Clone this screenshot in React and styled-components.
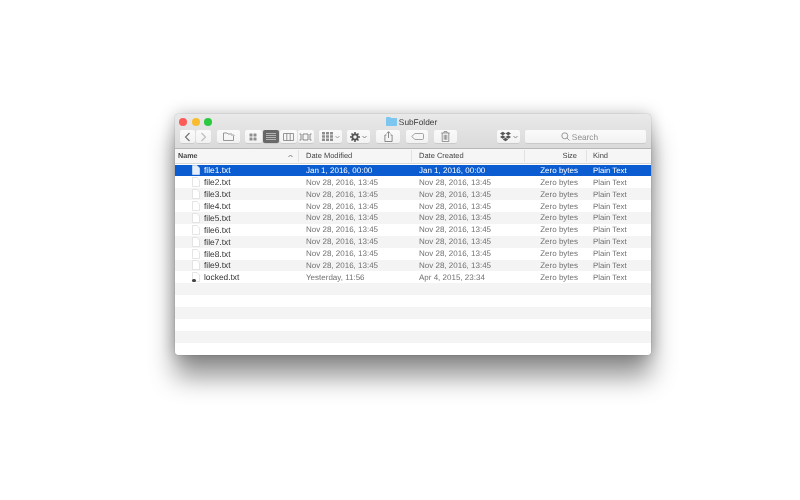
import React from 'react';
import styled, { createGlobalStyle } from 'styled-components';
import { FaDropbox } from 'react-icons/fa';

const GlobalStyle = createGlobalStyle`
  html, body {
    margin: 0;
    background: #fff;
    font-family: "Liberation Sans", Arial, sans-serif;
    text-rendering: geometricPrecision;
  }
`;

const Page = styled.div`
  width: 800px;
  height: 500px;
  padding: 114px 0 0 175px;
  box-sizing: border-box;
  overflow: hidden;
`;

const Window = styled.div`
  width: 476px;
  height: 241px;
  border-radius: 4px;
  overflow: hidden;
  background: #fff;
  box-shadow: 0 22px 26px rgba(0, 0, 0, 0.42), 0 0 16px rgba(0, 0, 0, 0.26), 0 0 1px rgba(0, 0, 0, 0.5);
  filter: blur(0.3px);
`;

const TitleBar = styled.div`
  height: 35px;
  box-sizing: border-box;
  background: linear-gradient(#e9e9e9, #dadada);
  border-bottom: 1px solid #b8b8b8;
`;

const TitleRow = styled.div`
  position: relative;
  height: 15px;
  display: flex;
  align-items: center;
  justify-content: center;
  gap: 2px;
  font-size: 8.3px;
  color: #3a3a3a;
  margin-bottom: 1px;
  padding-right: 3px;
`;

const Lights = styled.div`
  position: absolute;
  left: 4px;
  top: 3.5px;
  display: flex;
  gap: 4.5px;
`;

const Light = styled.span`
  width: 8px;
  height: 8px;
  border-radius: 50%;
  background: ${props => props.color};
`;

const Toolbar = styled.div`
  display: flex;
  align-items: flex-start;
  height: 14px;
  padding-left: 5px;
`;

const Group = styled.div`
  display: flex;
  gap: ${props => props.gap || 1}px;
  margin-left: ${props => props.left || 0}px;
`;

const Button = styled.div`
  width: ${props => props.width}px;
  height: 13px;
  display: flex;
  align-items: center;
  justify-content: center;
  gap: 2px;
  border-radius: 2px;
  background: ${props => props.active ? '#686868' : 'linear-gradient(#fafafa, #f2f2f2)'};
  box-shadow: 0 0.5px 0.5px rgba(0, 0, 0, 0.16);
  color: ${props => props.active ? '#b4b4b4' : props.faded ? '#bcbcbc' : props.soft ? '#8e8e8e' : '#707070'};
`;

const SearchField = styled(Button)`
  margin-left: 5px;
  padding-right: 12px;
  box-sizing: border-box;
  color: #8f8f8f;
  font-size: 8.3px;
`;

const Header = styled.div`
  display: grid;
  grid-template-columns: 124px 113px 113px 62px 64px;
  height: 15px;
  box-sizing: border-box;
  background: #f6f6f6;
  border-bottom: 1px solid #d8d8d8;
  font-size: 7.5px;
  color: #444;
`;

const HeaderCell = styled.div`
  display: flex;
  align-items: center;
  justify-content: ${props => props.right ? 'flex-end' : 'space-between'};
  padding: ${props => props.right ? '0 9px 1px 0' : props.first ? '0 5px 1px 3px' : '0 0 1px 7px'};
  border-right: ${props => props.last ? 'none' : '1px solid #e2e2e2'};
  margin: 1px 0;
  font-weight: ${props => props.first ? 700 : 400};
  font-size: ${props => props.first ? '7.2px' : 'inherit'};
`;

const KindHeader = styled(HeaderCell)`
  padding-left: 6px;
`;

const Rows = styled.div`
  display: flex;
  flex-direction: column;
  padding-top: 0.5px;
`;

const Row = styled.div`
  display: grid;
  grid-template-columns: 124px 113px 113px 62px 64px;
  align-items: center;
  height: 11.875px;
  flex: none;
  font-size: 8px;
  background: ${props => props.selected ? '#0b5cd0' : props.striped ? '#f4f4f4' : '#fff'};
  color: ${props => props.selected ? '#fff' : '#707070'};
`;

const NameCell = styled.div`
  position: relative;
  display: flex;
  align-items: center;
  gap: 4px;
  padding-left: 17px;
  font-size: 8.4px;
  color: ${props => props.selected ? '#fff' : '#333'};
`;

const LockDot = styled.span`
  position: absolute;
  left: 17px;
  bottom: 0;
  width: 3.5px;
  height: 3.5px;
  border-radius: 50%;
  background: #444;
`;

const DateCell = styled.div`
  padding-left: 7px;
`;

const KindCell = styled.div`
  padding-left: 6px;
  font-size: 7.8px;
`;

const SizeCell = styled.div`
  text-align: right;
  padding-right: 9px;
`;

const Icon = ({ width = 12, height = 10, children }) => (
  <svg width={width} height={height} viewBox={`0 0 ${width} ${height}`} fill="none" stroke="currentColor" strokeWidth="0.9">
    {children}
  </svg>
);

const FileIcon = ({ selected }) => (
  <svg width="8" height="10" viewBox="0 0 8 10">
    <path
      d="M.5.5H5L7.5 3V9.5H.5Z"
      fill={selected ? '#e4eefb' : '#fff'}
      stroke={selected ? '#e4eefb' : '#d4d4d4'}
      strokeWidth="0.6"
    />
  </svg>
);

const FolderIcon = () => (
  <svg width="11" height="9" viewBox="0 0 11 9">
    <path d="M0 1.2C0 .5.5 0 1 0H4L5 1H10C10.600 1 11 1.400 11 2V8C11 8.600 10.600 9 10 9H1C.4 9 0 8.600 0 8Z" fill="#7cc6ef" />
  </svg>
);

const Caret = () => (
  <svg width="5" height="4" viewBox="0 0 5 4" fill="none" stroke="currentColor" strokeWidth="0.8">
    <path d="M.5 1 2.500 3 4.500 1" />
  </svg>
);

const files = [
  { name: 'file1.txt', modified: 'Jan 1, 2016, 00:00', created: 'Jan 1, 2016, 00:00', selected: true },
  { name: 'file2.txt' },
  { name: 'file3.txt' },
  { name: 'file4.txt' },
  { name: 'file5.txt' },
  { name: 'file6.txt' },
  { name: 'file7.txt' },
  { name: 'file8.txt' },
  { name: 'file9.txt' },
  { name: 'locked.txt', modified: 'Yesterday, 11:56', created: 'Apr 4, 2015, 23:34', locked: true },
];

function App() {
  const blanks = Array.from({ length: 6 });

  return (
    <Page>
      <GlobalStyle />
      <Window>
        <TitleBar>
          <TitleRow>
            <Lights>
              <Light color="#fc5b57" />
              <Light color="#f9bc2e" />
              <Light color="#2ac940" />
            </Lights>
            <FolderIcon />
            SubFolder
          </TitleRow>
          <Toolbar>
            <Group>
              <Button width={15}>
                <Icon width={7} height={10}><path d="M5.500 1 1.500 5 5.500 9" strokeWidth="1.1" /></Icon>
              </Button>
              <Button width={15} faded>
                <Icon width={7} height={10}><path d="M1.500 1 5.500 5 1.500 9" strokeWidth="1.1" /></Icon>
              </Button>
            </Group>
            <Group left={6}>
              <Button width={23}>
                <Icon width={12} height={9}><path d="M.5 8.500V1H4L5 2H9M.5 8.500H10.500V4M8.500 4 10 2.500 11.500 4" strokeWidth="0.7" /></Icon>
              </Button>
            </Group>
            <Group left={5}>
              <Button width={16.5} soft>
                <svg width="8" height="8" viewBox="0 0 8 8" fill="currentColor">
                  <rect x="0.5" y="0.5" width="3" height="3" rx="0.5" />
                  <rect x="4.500" y="0.5" width="3" height="3" rx="0.5" />
                  <rect x="0.5" y="4.500" width="3" height="3" rx="0.5" />
                  <rect x="4.500" y="4.500" width="3" height="3" rx="0.5" />
                </svg>
              </Button>
              <Button width={16.5} active>
                <Icon width={10} height={9}><path d="M0 1.500H10M0 3.500H10M0 5.500H10M0 7.500H10" strokeWidth="1.1" /></Icon>
              </Button>
              <Button width={16.5}>
                <Icon width={11} height={8}><path d="M.5.5H10.500V7.500H.5ZM3.800.5V7.500M7.200.5V7.500" strokeWidth="0.7" /></Icon>
              </Button>
              <Button width={16.5}>
                <Icon width={13} height={8}><path d="M.5 1H2V7H.5M4 1H9V7H4ZM12.500 1H11V7H12.500" strokeWidth="0.8" /></Icon>
              </Button>
            </Group>
            <Group left={5}>
              <Button width={23} soft>
                <svg width="11" height="9" viewBox="0 0 11 9" fill="currentColor">
                  <path d="M0 0H3V2.500H0ZM4 0H7V2.500H4ZM8 0H11V2.500H8ZM0 3.250H3V5.750H0ZM4 3.250H7V5.750H4ZM8 3.250H11V5.750H8ZM0 6.500H3V9H0ZM4 6.500H7V9H4ZM8 6.500H11V9H8Z" />
                </svg>
                <Caret />
              </Button>
            </Group>
            <Group left={5}>
              <Button width={23}>
                <svg width="10" height="10" viewBox="0 0 10 10" fill="none" stroke="#555">
                  <circle cx="5" cy="5" r="2.600" strokeWidth="1.700" />
                  <path d="M5 0V2M5 8V10M0 5H2M8 5H10M1.500 1.500 2.900 2.900M7.100 7.100 8.500 8.500M8.500 1.500 7.100 2.900M2.900 7.100 1.500 8.500" strokeWidth="1.500" />
                </svg>
                <Caret />
              </Button>
            </Group>
            <Group left={6}>
              <Button width={24}>
                <Icon width={9} height={11}><path d="M2.500 4H.9V10.500H8.100V4H6.500M4.500 7V.8M2.700 2.500 4.500.7 6.300 2.500" strokeWidth="0.8" /></Icon>
              </Button>
            </Group>
            <Group left={6}>
              <Button width={22} soft>
                <Icon width={13} height={7}><path d="M4 .5H11.500C12.100.5 12.500.9 12.500 1.500V5.500C12.500 6.100 12.100 6.500 11.500 6.500H4L.7 3.500Z" strokeWidth="0.8" /></Icon>
              </Button>
            </Group>
            <Group left={6}>
              <Button width={23}>
                <Icon width={9} height={11}><path d="M.3 2H8.700M3 2V.6H6V2M1.200 2V10.500H7.800V2M3.200 3.800V8.800M4.500 3.800V8.800M5.800 3.800V8.800" strokeWidth="0.7" /></Icon>
              </Button>
            </Group>
            <Group left={40}>
              <Button width={23}>
                <FaDropbox size={11} color="#555" />
                <Caret />
              </Button>
            </Group>
            <SearchField width={121}>
              <Icon width={9} height={9}><circle cx="3.800" cy="3.800" r="3" /><path d="M6 6 8.500 8.500" /></Icon>
              Search
            </SearchField>
          </Toolbar>
        </TitleBar>
        <Header>
          <HeaderCell first>
            Name
            <svg width="5" height="4" viewBox="0 0 5 4" fill="none" stroke="#777" strokeWidth="0.9">
              <path d="M.5 3 2.500 1 4.500 3" />
            </svg>
          </HeaderCell>
          <HeaderCell>Date Modified</HeaderCell>
          <HeaderCell>Date Created</HeaderCell>
          <HeaderCell right>Size</HeaderCell>
          <KindHeader last>Kind</KindHeader>
        </Header>
        <Rows>
          {files.map((file, i) => (
            <Row key={file.name} selected={file.selected} striped={i % 2 === 0}>
              <NameCell selected={file.selected}>
                <FileIcon selected={file.selected} />
                {file.locked && <LockDot />}
                {file.name}
              </NameCell>
              <DateCell>{file.modified || 'Nov 28, 2016, 13:45'}</DateCell>
              <DateCell>{file.created || 'Nov 28, 2016, 13:45'}</DateCell>
              <SizeCell>Zero bytes</SizeCell>
              <KindCell>Plain Text</KindCell>
            </Row>
          ))}
          {blanks.map((_, i) => (
            <Row key={i} striped={i % 2 === 0} />
          ))}
        </Rows>
      </Window>
    </Page>
  );
}

export default App;
